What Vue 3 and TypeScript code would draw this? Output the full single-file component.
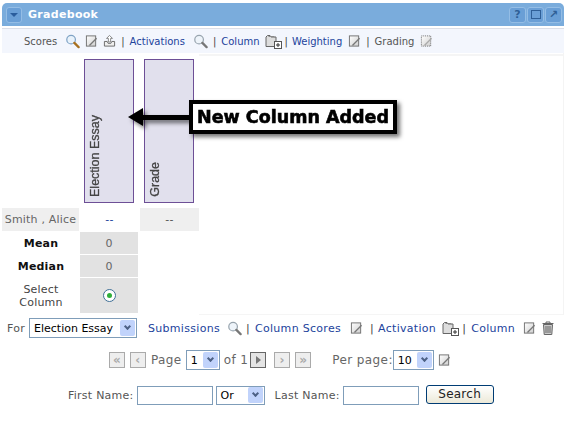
<script setup lang="ts">
const students = [{ name: 'Smith , Alice', essay: '--', grade: '--' }]
const pagerLeft = ['«', '‹']
const pagerRight = ['›', '»']
</script>

<template>
  <div class="page">
    <svg class="defs" width="0" height="0">
      <defs>
        <linearGradient id="paper" x1="0" y1="0" x2="1" y2="1">
          <stop offset="0" stop-color="#fff" />
          <stop offset="1" stop-color="#cfcfcf" />
        </linearGradient>
      </defs>
      <symbol id="i-search" viewBox="0 0 16 16">
        <circle cx="6.500" cy="6" r="4.600" fill="#eef4fa" stroke="#98a4ae" stroke-width="1.300" />
        <path d="M10 9.500l4.500 4.500" stroke="#777" stroke-width="2.400" stroke-linecap="round" />
      </symbol>
      <symbol id="i-search-gold" viewBox="0 0 16 16">
        <circle cx="6.500" cy="6" r="4.600" fill="#e8f2fb" stroke="#7fa3c5" stroke-width="1.300" />
        <path d="M10 9.500l4.500 4.500" stroke="#a8701f" stroke-width="2.400" stroke-linecap="round" />
      </symbol>
      <symbol id="i-edit" viewBox="0 0 14 14">
        <rect x="1.500" y="1.500" width="10" height="11" fill="url(#paper)" stroke="#6f6f6f" />
        <path d="M4 11.500l8-8 1 1-7.500 7.500z" fill="#777" />
      </symbol>
      <symbol id="i-edit-off" viewBox="0 0 14 14">
        <rect x="1.500" y="1.500" width="10" height="11" fill="url(#paper)" stroke="#666" stroke-dasharray="1 1" />
        <path d="M4 11.500l8-8 1 1-7.500 7.500z" fill="#aaa" />
      </symbol>
      <symbol id="i-upload" viewBox="0 0 14 14">
        <path d="M1.500 7.500h3l1 2h3l1-2h3v5h-11z" fill="#eee" stroke="#666" />
        <path d="M7 1L3.800 4.200h2V8h2.400V4.200h2z" fill="#fff" stroke="#666" stroke-width=".8" />
      </symbol>
      <symbol id="i-add" viewBox="0 0 17 15">
        <path d="M1 4V12.500h10V3H6L5 1.500H2.500L1 3z" fill="#ddd" stroke="#666" />
        <path d="M3.500 2.500H9l1 1" fill="none" stroke="#888" />
        <rect x="9.500" y="7.500" width="7" height="7" fill="#fff" stroke="#555" />
        <path d="M13 9v4M11 11h4" stroke="#333" />
      </symbol>
      <symbol id="i-trash" viewBox="0 0 12 14">
        <path d="M.5 2.500h11M4 2.500V1h4v1.500" fill="none" stroke="#666" />
        <path d="M1.500 3.500h9l-.7 10H2.200z" fill="#ccc" stroke="#666" />
        <path d="M4 5v7M6 5v7M8 5v7" stroke="#666" />
      </symbol>
    </svg>

    <header class="titlebar">
      <div class="title-left">
        <span class="win-btn menu-btn"><i class="down" /></span>
        <span class="title">Gradebook</span>
      </div>
      <div class="title-right">
        <span class="win-btn small">?</span>
        <span class="win-btn small"><i class="square" /></span>
        <span class="win-btn small">↗</span>
      </div>
    </header>

    <nav class="toolbar">
      <span class="plain">Scores</span>
      <svg class="ic16"><use href="#i-search-gold" /></svg>
      <svg class="ic14"><use href="#i-edit" /></svg>
      <svg class="ic14"><use href="#i-upload" /></svg>
      <span class="sep">|</span>
      <a>Activations</a>
      <svg class="ic16 wide"><use href="#i-search" /></svg>
      <span class="sep">|</span>
      <a>Column</a>
      <svg class="ic17"><use href="#i-add" /></svg>
      <span class="sep tight">|</span>
      <a>Weighting</a>
      <svg class="ic14 wide"><use href="#i-edit" /></svg>
      <span class="sep">|</span>
      <span class="plain">Grading</span>
      <svg class="ic14 wide"><use href="#i-edit-off" /></svg>
    </nav>

    <section class="grade-grid">
      <div class="head-row">
        <div class="col-name" />
        <div class="col-head"><div class="head-box"><span>Election Essay</span></div></div>
        <div class="col-head"><div class="head-box"><span>Grade</span></div></div>
      </div>

      <div v-for="s in students" :key="s.name" class="row student">
        <div class="cell-name">{{ s.name }}</div>
        <div class="cell-link">{{ s.essay }}</div>
        <div class="cell-grade">{{ s.grade }}</div>
      </div>
      <div class="row stat">
        <div class="label"><b>Mean</b></div>
        <div class="val">0</div>
      </div>
      <div class="row stat">
        <div class="label"><b>Median</b></div>
        <div class="val">0</div>
      </div>
      <div class="row stat select-row">
        <div class="label">Select<br>Column</div>
        <div class="val"><span class="radio"><i /></span></div>
      </div>
    </section>

    <div class="callout">
      <span class="arrow-line" />
      <span class="arrow-head" />
      <div class="callout-box">New Column Added</div>
    </div>

    <div class="for-row">
      <span class="plain for-label">For</span>
      <span class="select for-select"><span>Election Essay</span><i class="sel-btn"><b /></i></span>
      <a class="first">Submissions</a>
      <svg class="ic16 wide"><use href="#i-search" /></svg>
      <span class="sep sep-first">|</span>
      <a>Column Scores</a>
      <svg class="ic14 wide"><use href="#i-edit" /></svg>
      <span class="sep">|</span>
      <a>Activation</a>
      <svg class="ic17"><use href="#i-add" /></svg>
      <span class="sep tight">|</span>
      <a>Column</a>
      <svg class="ic14 wide last-edit"><use href="#i-edit" /></svg>
      <svg class="ic12"><use href="#i-trash" /></svg>
    </div>

    <div class="pager">
      <span v-for="p in pagerLeft" :key="p" class="pg-btn">{{ p }}</span>
      <span class="plain pg-text">Page</span>
      <span class="select pg-select"><span>1</span><i class="sel-btn"><b /></i></span>
      <span class="plain pg-text">of 1</span>
      <span class="pg-btn go"><i /></span>
      <span class="pg-gap" />
      <span v-for="p in pagerRight" :key="p" class="pg-btn">{{ p }}</span>
      <span class="plain pg-text per">Per page:</span>
      <span class="select pg-select per-select"><span>10</span><i class="sel-btn"><b /></i></span>
      <svg class="ic14 pg-edit"><use href="#i-edit" /></svg>
    </div>

    <div class="search-row">
      <span class="plain">First Name:</span>
      <span class="input" />
      <span class="select or-select"><span>Or</span><i class="sel-btn"><b /></i></span>
      <span class="plain last">Last Name:</span>
      <span class="input" />
      <span class="search-btn">Search</span>
    </div>
  </div>
</template>

<style>
html,
body {
  margin: 0;
  background: #fff;
}
</style>

<style scoped>
.page {
  position: relative;
  width: 572px;
  height: 423px;
  overflow: hidden;
  padding: 3px 8px 0 2px;
  box-sizing: border-box;
  font-family: "DejaVu Sans", Verdana, sans-serif;
  font-size: 10px;
  color: #555;
  background: #fff;
}

.defs {
  position: absolute;
}

.titlebar {
  height: 23px;
  display: flex;
  align-items: center;
  justify-content: space-between;
  background: #7aacdc;
  border-radius: 5px 5px 0 0;
  padding: 0 2px 0 4px;
}

.title-left,
.title-right {
  display: flex;
  align-items: center;
}

.title-right {
  gap: 1px;
}

.title {
  margin-left: 6px;
  color: #fff;
  font-size: 11px;
  font-weight: 700;
  letter-spacing: 0.3px;
}

.win-btn {
  display: flex;
  align-items: center;
  justify-content: center;
  box-sizing: border-box;
  width: 17px;
  height: 16px;
  background: #6a9fd6;
  border: 1px solid #94bde5;
  border-radius: 3px;
  color: #2f5f97;
  font-size: 11px;
  font-weight: 700;
  line-height: 1;
}

.menu-btn {
  width: 16px;
  height: 16px;
}

.down {
  width: 0;
  height: 0;
  border-left: 4px solid transparent;
  border-right: 4px solid transparent;
  border-top: 4px solid #2a5d9c;
}

.square {
  width: 8px;
  height: 7px;
  border: 1px solid #2f5f97;
}

.toolbar {
  margin-top: 2px;
  height: 24px;
  display: flex;
  align-items: center;
  padding-left: 22px;
  background: #f3f6fd;
  border-top: 1px solid #dcdfe8;
}

.plain {
  color: #555;
}

a {
  color: #22439c;
  white-space: nowrap;
}

.sep {
  margin: 0 5px;
  color: #444;
}

.sep.tight {
  margin: 0 4px 0 3px;
}

svg {
  flex: none;
}

.ic16 {
  width: 15px;
  height: 15px;
  margin-left: 8px;
}

.ic14 {
  width: 13px;
  height: 14px;
  margin-left: 5px;
}

.ic14.wide {
  margin-left: 6px;
}

.ic17 {
  width: 17px;
  height: 15px;
  margin-left: 5px;
}

.ic12 {
  width: 12px;
  height: 14px;
  margin-left: 6px;
}

.grade-grid {
  padding: 6px 0 1px;
  border-right: 1px solid #f4f4f4;
  font-size: 11px;
  letter-spacing: 0.2px;
  background:
    linear-gradient(#f5f5f5, #f5f5f5) 197px 1px / 100% 2px no-repeat,
    linear-gradient(#f5f5f5, #f5f5f5) 197px 100% / 100% 1px no-repeat;
}

.head-row {
  display: flex;
  height: 149px;
}

.col-name {
  width: 78px;
}

.col-head {
  width: 60px;
  padding-left: 4px;
  box-sizing: border-box;
}

.head-box {
  width: 50px;
  height: 144px;
  box-sizing: border-box;
  display: flex;
  align-items: flex-end;
  padding: 0 0 5px 0;
  background: #e1e0ed;
  border: 1px solid #6d4f96;
  font-family: "Liberation Sans", Arial, sans-serif;
  font-size: 12.500px;
  letter-spacing: 0;
  color: #444;
  -webkit-text-stroke: 0.3px #444;
}

.head-box span {
  writing-mode: vertical-rl;
  transform: rotate(180deg);
  margin-left: 3px;
  white-space: nowrap;
}

.row {
  display: flex;
  align-items: stretch;
  margin-bottom: 1px;
}

.student {
  height: 23px;
  line-height: 23px;
  text-align: center;
}

.cell-name {
  width: 77px;
  background: #efefef;
  color: #666;
  white-space: nowrap;
}

.cell-link {
  width: 61px;
  color: #22439c;
}

.cell-grade {
  width: 59px;
  background: #efefef;
}

.stat {
  height: 22px;
  text-align: center;
}

.stat .label {
  width: 78px;
  display: flex;
  align-items: center;
  justify-content: center;
  color: #444;
  line-height: 13px;
}

.stat b {
  color: #111;
}

.stat .val {
  width: 58px;
  display: flex;
  align-items: center;
  justify-content: center;
  background: #e2e2e2;
  color: #666;
}

.select-row {
  height: 35px;
}

.radio {
  display: flex;
  align-items: center;
  justify-content: center;
  box-sizing: border-box;
  width: 13px;
  height: 13px;
  background: #fff;
  border: 1px solid #3f6f96;
  border-radius: 50%;
}

.radio i {
  width: 5px;
  height: 5px;
  border-radius: 50%;
  background: #2fae3a;
}

.callout {
  position: absolute;
  left: 128px;
  top: 100px;
  width: 269px;
  height: 35px;
  filter: drop-shadow(3px 3px 2px rgba(0, 0, 0, 0.55));
}

.callout-box {
  position: absolute;
  left: 61px;
  top: 0;
  box-sizing: border-box;
  width: 208px;
  height: 34px;
  background: #fff;
  border: 4px solid #000;
  color: #000;
  font-size: 17.500px;
  font-weight: 700;
  line-height: 26px;
  text-align: center;
  white-space: nowrap;
  -webkit-text-stroke: 0.6px #000;
}

.arrow-line {
  position: absolute;
  left: 12px;
  top: 15px;
  width: 50px;
  height: 5px;
  background: #000;
}

.arrow-head {
  position: absolute;
  left: 0;
  top: 8px;
  width: 0;
  height: 0;
  border-top: 9.500px solid transparent;
  border-bottom: 9.500px solid transparent;
  border-right: 15px solid #000;
}

.for-row {
  margin-top: 2px;
  height: 22px;
  display: flex;
  align-items: center;
  padding-left: 5px;
  font-size: 11px;
  letter-spacing: 0.3px;
}

.for-label {
  width: 18px;
  margin-right: 4px;
}

.first {
  margin-left: 11px;
}

.for-row .ic16 {
  margin-left: 7px;
}

.for-row .sep {
  margin: 0 4px 0 7px;
}

.for-row .sep.sep-first {
  margin: 0 5px 0 4px;
}

.for-row .ic14.wide {
  margin-left: 9px;
}

.for-row .ic14.last-edit {
  margin-left: 8px;
}

.for-row .ic17 {
  margin-left: 6px;
}

.for-row .sep.tight {
  margin: 0 5px 0 3px;
}

.select {
  display: inline-flex;
  align-items: center;
  justify-content: space-between;
  box-sizing: border-box;
  height: 20px;
  padding: 0 1px 0 4px;
  background: #fff;
  border: 1px solid #7f9db9;
  color: #000;
  font-size: 11px;
  letter-spacing: 0;
  white-space: nowrap;
}

.for-select {
  width: 108px;
}

.sel-btn {
  display: flex;
  align-items: center;
  justify-content: center;
  width: 15px;
  height: 16px;
  background: #c1d3fb;
  border-radius: 2px;
}

.sel-btn b {
  width: 5px;
  height: 5px;
  margin-top: -3px;
  border-right: 2px solid #4d6185;
  border-bottom: 2px solid #4d6185;
  transform: rotate(45deg);
  box-sizing: border-box;
}

.pager {
  margin-top: 9px;
  height: 24px;
  display: flex;
  align-items: center;
  padding-left: 107px;
  font-size: 12px;
  letter-spacing: 0.4px;
}

.pg-btn {
  display: flex;
  align-items: center;
  justify-content: center;
  box-sizing: border-box;
  width: 16px;
  height: 16px;
  margin-right: 5px;
  background: #eee;
  border: 1px solid #aaa;
  color: #aaa;
  font-size: 12px;
  font-weight: 700;
  line-height: 1;
}

.pg-btn.go {
  border: 1px solid #666;
  margin: 0 0 0 2px;
  background: #e4e4e4;
}

.go i {
  width: 0;
  height: 0;
  border-top: 4px solid transparent;
  border-bottom: 4px solid transparent;
  border-left: 5px solid #777;
}

.pg-gap {
  width: 8px;
}

.pg-text {
  color: #666;
  white-space: nowrap;
}

.pg-text.per {
  margin: 0 0 0 16px;
}

.pg-select {
  width: 34px;
  margin: 0 4px;
}

.per-select {
  width: 41px;
  margin: 0;
}

.pg-edit {
  margin-left: 4px;
}

.search-row {
  margin-top: 12px;
  height: 22px;
  display: flex;
  align-items: center;
  padding-left: 66px;
  font-size: 11px;
  letter-spacing: 0.25px;
  color: #555;
}

.input {
  box-sizing: border-box;
  width: 76px;
  height: 19px;
  margin-left: 3px;
  background: #fff;
  border: 1px solid #7f9db9;
}

.or-select {
  width: 49px;
  height: 19px;
  margin-left: 3px;
}

.last {
  margin-left: 10px;
}

.search-btn {
  box-sizing: border-box;
  width: 68px;
  height: 19px;
  margin: -2px 0 0 7px;
  text-align: center;
  line-height: 16px;
  font-size: 12px;
  color: #222;
  background: linear-gradient(#fff, #ece9d8);
  border: 1px solid #003c74;
  border-radius: 3px;
}
</style>
